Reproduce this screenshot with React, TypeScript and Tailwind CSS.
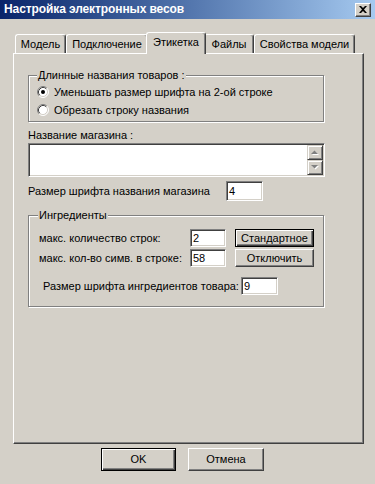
import type { ReactNode } from "react";

function Radio({ checked }: { checked?: boolean }) {
  return (
    <svg width="12" height="12" viewBox="0 0 12 12" className="shrink-0">
      <circle cx="6" cy="6" r="5" fill="#fff" />
      <path d="M2.11 9.89 A5.5 5.5 0 0 1 9.89 2.11" fill="none" stroke="#808080" strokeWidth="1" />
      <path d="M9.89 2.11 A5.5 5.5 0 0 1 2.11 9.89" fill="none" stroke="#fff" strokeWidth="1" />
      <path d="M2.82 9.18 A4.5 4.5 0 0 1 9.18 2.82" fill="none" stroke="#404040" strokeWidth="1" />
      <path d="M9.18 2.82 A4.5 4.5 0 0 1 2.82 9.18" fill="none" stroke="#d4d0c8" strokeWidth="1" />
      {checked ? <circle cx="6" cy="6" r="2" fill="#000" /> : null}
    </svg>
  );
}

function TextBox({ value, className }: { value: string; className: string }) {
  return (
    <div
      className={`flex items-center bg-white pl-[2px] border border-t-[#808080] border-l-[#808080] border-r-white border-b-white shadow-[inset_1px_1px_0_#404040,inset_-1px_-1px_0_#d4d0c8] ${className}`}
    >
      {value}
    </div>
  );
}

function Button({ children, primary, className }: { children: ReactNode; primary?: boolean; className: string }) {
  if (primary) {
    return (
      <div
        className={`flex items-center justify-center border border-black shadow-[inset_1px_1px_0_#fff,inset_-1px_-1px_0_#404040,inset_-2px_-2px_0_#808080] ${className}`}
      >
        {children}
      </div>
    );
  }
  return (
    <div
      className={`flex items-center justify-center border border-t-white border-l-white border-r-[#404040] border-b-[#404040] shadow-[inset_-1px_-1px_0_#808080] ${className}`}
    >
      {children}
    </div>
  );
}

function ScrollArrow({ up }: { up?: boolean }) {
  return (
    <div className="flex flex-1 items-center justify-center border border-t-[#d4d0c8] border-l-[#d4d0c8] border-r-[#404040] border-b-[#404040] bg-[#d4d0c8] shadow-[inset_1px_1px_0_#fff,inset_-1px_-1px_0_#808080]">
      <svg width="8" height="5" viewBox="0 0 8 5">
        {up ? (
          <>
            <path d="M1 5 L8 5 L4.5 1.5 Z" fill="#fff" />
            <path d="M0 4 L7 4 L3.5 0.5 Z" fill="#808080" />
          </>
        ) : (
          <>
            <path d="M1 1 L8 1 L4.5 4.5 Z" fill="#fff" />
            <path d="M0 0 L7 0 L3.5 3.5 Z" fill="#808080" />
          </>
        )}
      </svg>
    </div>
  );
}

function Tab({ label, className, active }: { label: string; className: string; active?: boolean }) {
  return (
    <div
      className={`flex items-center justify-center rounded-t-[3px] border-l border-t border-r border-l-white border-t-white border-r-[#404040] bg-[#d4d0c8] shadow-[inset_-1px_0_0_#808080] ${
        active ? "relative z-10 -mx-[2px] -mb-[1px] h-[22px] pb-[2px]" : "h-[19px]"
      } ${className}`}
    >
      {label}
    </div>
  );
}

export default function App() {
  return (
    <div className="flex h-[484px] w-[375px] flex-col overflow-hidden bg-[#d4d0c8] font-['Liberation_Sans',Arial,sans-serif] text-[11px] leading-[13px] text-black">
      <div className="flex h-[19px] items-center justify-between bg-gradient-to-r from-[#0a246a] to-[#a6caf0] pl-[4px] pr-[4px]">
        <span className="text-[12px] font-bold tracking-[-0.1px] text-white">Настройка электронных весов</span>
        <div className="flex h-[14px] w-[16px] items-center justify-center border border-t-white border-l-white border-r-[#404040] border-b-[#404040] bg-[#d4d0c8] shadow-[inset_-1px_-1px_0_#808080]">
          <svg width="8" height="7" viewBox="0 0 8 7">
            <path d="M0 0 H2 L4 2 L6 0 H8 L5 3.5 L8 7 H6 L4 5 L2 7 H0 L3 3.5 Z" fill="#000" />
          </svg>
        </div>
      </div>

      <div className="ml-[13px] mt-[13px] flex h-[21px] items-end pl-[2px]">
        <Tab label="Модель" className="w-[51px]" />
        <Tab label="Подключение" className="w-[82px]" />
        <Tab label="Этикетка" className="w-[60px]" active />
        <Tab label="Файлы" className="w-[50px]" />
        <Tab label="Свойства модели" className="w-[101px]" />
      </div>

      <div className="ml-[13px] flex h-[391px] w-[351px] flex-col border border-t-white border-l-white border-r-[#404040] border-b-[#404040] pl-[14px] shadow-[inset_-1px_-1px_0_#808080]">
        <div className="mt-[21px] flex w-[296px] flex-col border border-[#808080] pb-[3px] pl-[8px] shadow-[inset_1px_1px_0_#fff,1px_1px_0_#fff]">
          <span className="-mt-[7px] self-start bg-[#d4d0c8] px-[1px]">Длинные названия товаров :</span>
          <div className="mt-[2px] flex h-[16px] items-center gap-[5px]">
            <Radio checked />
            <span>Уменьшать размер шрифта на 2-ой строке</span>
          </div>
          <div className="mt-[2px] flex h-[16px] items-center gap-[5px]">
            <Radio />
            <span>Обрезать строку названия</span>
          </div>
        </div>

        <span className="mt-[7px]">Название магазина :</span>
        <div className="mt-[1px] flex h-[34px] w-[297px] justify-end border border-t-[#808080] border-l-[#808080] border-r-white border-b-white bg-white p-[1px] shadow-[inset_1px_1px_0_#404040,inset_-1px_-1px_0_#d4d0c8]">
          <div className="flex w-[16px] flex-col">
            <ScrollArrow up />
            <ScrollArrow />
          </div>
        </div>

        <div className="mt-[4px] flex h-[20px] items-center">
          <span className="w-[198px]">Размер шрифта названия магазина</span>
          <TextBox value="4" className="h-[20px] w-[37px]" />
        </div>

        <div className="mt-[14px] flex w-[296px] flex-col border border-[#808080] pb-[11px] pl-[9px] shadow-[inset_1px_1px_0_#fff,1px_1px_0_#fff]">
          <span className="-mt-[7px] self-start bg-[#d4d0c8] px-[1px]">Ингредиенты</span>
          <div className="mt-[7px] flex h-[18px] items-center">
            <span className="w-[152px] pl-[1px]">макс. количество строк:</span>
            <TextBox value="2" className="h-[18px] w-[36px]" />
            <Button primary className="ml-[9px] h-[18px] w-[79px]">
              Стандартное
            </Button>
          </div>
          <div className="mt-[2px] flex h-[18px] items-center">
            <span className="w-[152px] pl-[1px]">макс. кол-во симв. в строке:</span>
            <TextBox value="58" className="h-[18px] w-[36px]" />
            <Button className="ml-[9px] h-[18px] w-[79px]">Отключить</Button>
          </div>
          <div className="mt-[10px] flex h-[18px] items-center">
            <span className="w-[203px] pl-[5px]">Размер шрифта ингредиентов товара:</span>
            <TextBox value="9" className="h-[18px] w-[37px]" />
          </div>
        </div>
      </div>

      <div className="ml-[101px] mt-[4px] flex gap-[12px]">
        <Button primary className="h-[23px] w-[75px]">
          OK
        </Button>
        <Button className="h-[23px] w-[76px]">Отмена</Button>
      </div>
    </div>
  );
}
